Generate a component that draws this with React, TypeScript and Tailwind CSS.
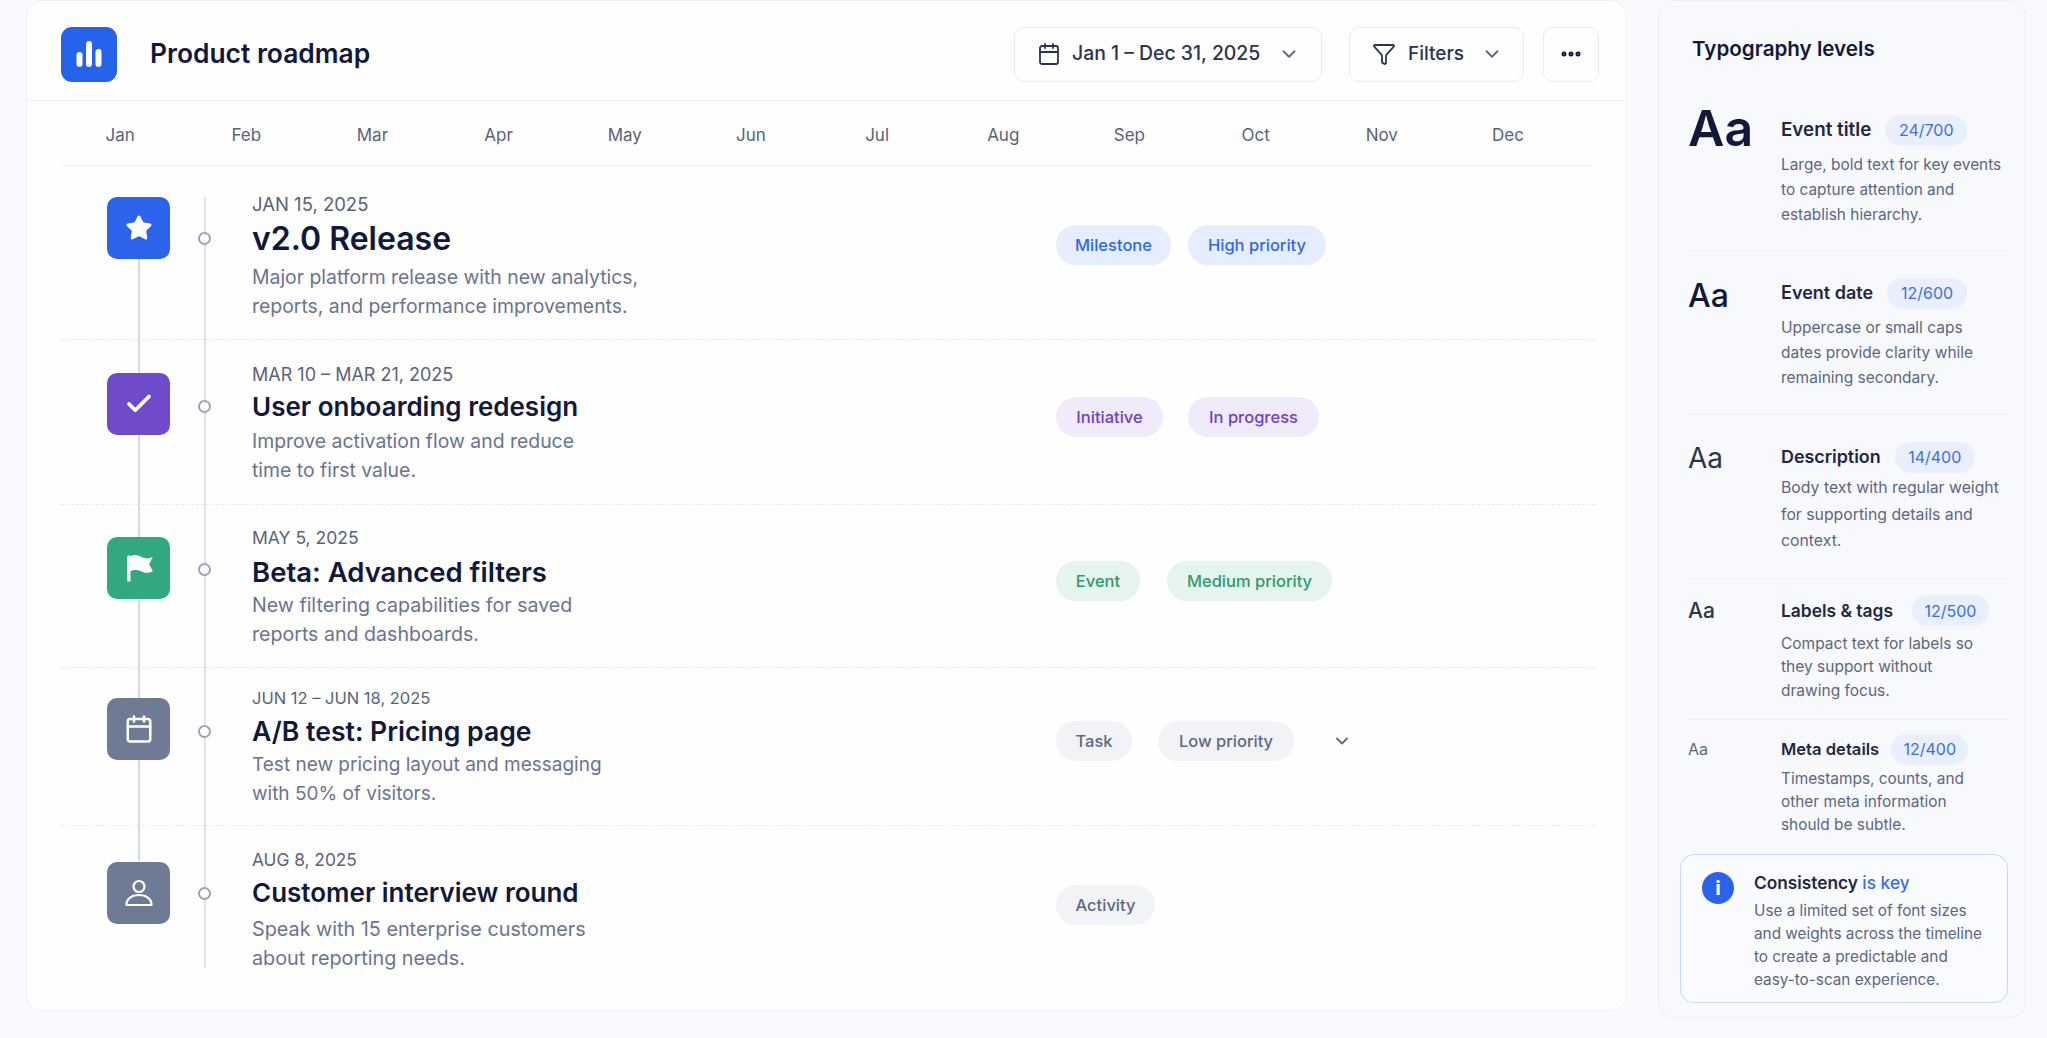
import { Calendar, Check, ChevronDown, Ellipsis, Funnel, Star } from 'lucide-react';

const months = ['Jan', 'Feb', 'Mar', 'Apr', 'May', 'Jun', 'Jul', 'Aug', 'Sep', 'Oct', 'Nov', 'Dec'];

const blueTag = 'bg-[#e6eefd] text-[#2f68e8]';
const purpleTag = 'bg-[#f0eafb] text-[#6d3fc8]';
const greenTag = 'bg-[#e5f5ee] text-[#2f9a6c]';
const grayTag = 'bg-[#f1f3f6] text-[#5f6880]';

function FlagIcon() {
  return (
    <svg width="32" height="32" viewBox="0 0 30 30" fill="white">
      <rect x="4" y="3" width="3" height="25" rx="1.5" />
      <path d="M6 4.500C10 1.500 15 3 18 5c3 1.500 6 1.500 10-.5L24.500 11.500 28 18c-4 2-7 2-10 .5-4-2-8-2.500-12 0z" />
    </svg>
  );
}

function PersonIcon() {
  return (
    <svg width="30" height="30" viewBox="0 0 30 30" fill="none" stroke="white" strokeWidth="2.2">
      <circle cx="15" cy="8.500" r="5.500" />
      <path d="M2.500 27c0-6.500 5.500-10 12.500-10s12.500 3.500 12.500 10z" strokeLinejoin="round" />
    </svg>
  );
}

const rows = [
  {
    date: 'JAN 15, 2025',
    dateSize: 'text-[18.500px]',
    title: 'v2.0 Release',
    titleSize: 'text-[32px] leading-[40px] mt-[5px]',
    desc: ['Major platform release with new analytics,', 'reports, and performance improvements.'],
    descSize: 'text-[19.400px]',
    rowClass: 'h-[174px]',
    tileTop: 'mt-[31px]',
    dotTop: 'mt-[66px]',
    textTop: 'mt-[28px]',
    descTop: 'mt-[4px]',
    tagsTop: 'mt-[59px] gap-[17px]',
    tile: 'bg-[#2b63ea]',
    icon: <Star size={28} fill="white" stroke="white" strokeWidth={1.5} />,
    tags: [['Milestone', blueTag, 'w-[115px]'], ['High priority', blueTag, 'w-[138px]']],
  },
  {
    date: 'MAR 10 – MAR 21, 2025',
    dateSize: 'text-[18px]',
    title: 'User onboarding redesign',
    titleSize: 'text-[26px] leading-[36px] mt-[4px]',
    desc: ['Improve activation flow and reduce', 'time to first value.'],
    descSize: 'text-[19.400px]',
    rowClass: 'h-[165px]',
    tileTop: 'mt-[33px]',
    dotTop: 'mt-[60px]',
    textTop: 'mt-[25px]',
    descTop: 'mt-[2px]',
    tagsTop: 'mt-[57px] gap-[25px]',
    tile: 'bg-[#6f4bc9]',
    icon: <Check size={30} stroke="white" strokeWidth={3} />,
    tags: [['Initiative', purpleTag, 'w-[107px]'], ['In progress', purpleTag, 'w-[131px]']],
  },
  {
    date: 'MAY 5, 2025',
    dateSize: 'text-[17.500px]',
    title: 'Beta: Advanced filters',
    titleSize: 'text-[27.500px] leading-[36px] mt-[6px]',
    desc: ['New filtering capabilities for saved', 'reports and dashboards.'],
    descSize: 'text-[19.600px]',
    rowClass: 'h-[163px]',
    tileTop: 'mt-[32px]',
    dotTop: 'mt-[58px]',
    textTop: 'mt-[23px]',
    descTop: 'mt-[1px]',
    tagsTop: 'mt-[56px] gap-[27px]',
    tile: 'bg-[#32a87e]',
    icon: <FlagIcon />,
    tags: [['Event', greenTag, 'w-[84px]'], ['Medium priority', greenTag, 'w-[165px]']],
  },
  {
    date: 'JUN 12 – JUN 18, 2025',
    dateSize: 'text-[16.500px]',
    title: 'A/B test: Pricing page',
    titleSize: 'text-[26.600px] leading-[36px] mt-[5px]',
    desc: ['Test new pricing layout and messaging', 'with 50% of visitors.'],
    descSize: 'text-[19px]',
    rowClass: 'h-[158px]',
    tileTop: 'mt-[30px]',
    dotTop: 'mt-[57px]',
    textTop: 'mt-[20px]',
    descTop: 'mt-[2px]',
    tagsTop: 'mt-[53px] gap-[26px]',
    tile: 'bg-[#6f7b94]',
    icon: <Calendar size={30} stroke="white" strokeWidth={2} />,
    tags: [['Task', grayTag, 'w-[76px]'], ['Low priority', grayTag, 'w-[136px]']],
    more: true,
  },
  {
    date: 'AUG 8, 2025',
    dateSize: 'text-[17.300px]',
    title: 'Customer interview round',
    titleSize: 'text-[26px] leading-[36px] mt-[5px]',
    desc: ['Speak with 15 enterprise customers', 'about reporting needs.'],
    descSize: 'text-[19.800px]',
    rowClass: 'h-[165px]',
    tileTop: 'mt-[36px]',
    dotTop: 'mt-[61px]',
    textTop: 'mt-[24px]',
    descTop: 'mt-[4px]',
    tagsTop: 'mt-[59px] gap-[26px]',
    tile: 'bg-[#6f7b94]',
    icon: <PersonIcon />,
    tags: [['Activity', grayTag, 'w-[99px]']],
  },
];

const levels = [
  {
    aa: 'text-[50px] font-semibold text-[#12183a] mt-[-2px]',
    name: 'Event title',
    nameSize: 'text-[18.800px]',
    spec: '24/700',
    pill: 'w-[82px] ml-[14px]',
    itemClass: 'mt-[55px] pb-[23px]',
    desc: ['Large, bold text for key events', 'to capture attention and', 'establish hierarchy.'],
    line: 'text-[15.400px] leading-[25px] mt-[10px]',
  },
  {
    aa: 'text-[32px] font-medium text-[#12183a] mt-[3px]',
    name: 'Event date',
    nameSize: 'text-[18px]',
    spec: '12/600',
    pill: 'w-[80px] ml-[14px]',
    itemClass: 'pt-[30px] pb-[24px]',
    desc: ['Uppercase or small caps', 'dates provide clarity while', 'remaining secondary.'],
    line: 'text-[15.500px] leading-[25px] mt-[10px]',
  },
  {
    aa: 'text-[28px] text-[#2b3350] mt-[1px]',
    name: 'Description',
    nameSize: 'text-[17.900px]',
    spec: '14/400',
    pill: 'w-[80px] ml-[14px]',
    itemClass: 'pt-[30px] pb-[23px]',
    desc: ['Body text with regular weight', 'for supporting details and', 'context.'],
    line: 'text-[15.800px] leading-[26.500px] mt-[6px]',
  },
  {
    aa: 'text-[21px] font-medium text-[#2b3350]',
    name: 'Labels & tags',
    nameSize: 'text-[17.400px]',
    spec: '12/500',
    pill: 'w-[77px] ml-[19px]',
    itemClass: 'pt-[20px] pb-[17px]',
    desc: ['Compact text for labels so', 'they support without', 'drawing focus.'],
    line: 'text-[15.500px] leading-[23.500px] mt-[9px]',
  },
  {
    aa: 'text-[16px] text-[#5f6880]',
    name: 'Meta details',
    nameSize: 'text-[16.600px]',
    spec: '12/400',
    pill: 'w-[77px] ml-[12px]',
    itemClass: 'pt-[17px]',
    desc: ['Timestamps, counts, and', 'other meta information', 'should be subtle.'],
    line: 'text-[15.400px] leading-[23px] mt-[6px]',
  },
];

export default function App() {
  return (
    <div className="h-[1038px] w-[2047px] overflow-hidden bg-[#f9fafd] font-['Inter',sans-serif]">
      <div className="flex items-start gap-[31px] pl-[26px]">
        {/* Roadmap card */}
        <main className="h-[1011px] w-[1601px] rounded-[16px] border border-[#eef0f6] bg-[#fefefe]">
          <header className="flex h-[100px] items-center border-b border-[#eef0f6] pl-[34px] pr-[27px] pt-[7px]">
            <div className="flex h-[55px] w-[56px] items-center justify-center rounded-[11px] bg-[#2563eb]">
              <svg width="30" height="30" viewBox="0 0 30 30" fill="white">
                <rect x="2.500" y="13" width="6" height="15" rx="3" />
                <rect x="12" y="2" width="6" height="26" rx="3" />
                <rect x="21.500" y="10" width="6" height="18" rx="3" />
              </svg>
            </div>
            <h1 className="ml-[33px] text-[26.400px] font-semibold text-[#12183a]">Product roadmap</h1>
            <div className="ml-auto flex items-center">
              <button className="flex h-[55px] w-[308px] items-center rounded-[10px] border border-[#e9ebf2] pl-[22px] text-[19.400px] font-medium text-[#2b3350]">
                <Calendar size={24} strokeWidth={1.8} />
                <span className="ml-[11px]">Jan 1 – Dec 31, 2025</span>
                <ChevronDown size={22} className="ml-auto mr-[21px] text-[#5f6880]" />
              </button>
              <button className="ml-[27px] flex h-[55px] w-[175px] items-center rounded-[10px] border border-[#e9ebf2] pl-[22px] text-[19px] font-medium text-[#2b3350]">
                <Funnel size={24} strokeWidth={1.8} />
                <span className="ml-[12px]">Filters</span>
                <ChevronDown size={22} className="ml-auto mr-[20px] text-[#5f6880]" />
              </button>
              <button className="ml-[19px] flex h-[55px] w-[56px] items-center justify-center rounded-[10px] border border-[#e9ebf2] text-[#12183a]">
                <Ellipsis size={24} strokeWidth={3} />
              </button>
            </div>
          </header>

          <div className="mx-[34px] h-[65px] w-[1534px] border-b border-[#eef0f6] pt-[6px]">
            <div className="ml-[-4px] grid h-full w-[1514px] grid-cols-12 items-center text-[17px] text-[#5a6378]">
              {months.map((m) => (
                <span key={m} className="text-center">{m}</span>
              ))}
            </div>
          </div>

          <div className="relative">
            <div className="absolute left-[111px] top-[90px] h-[605px] w-[2px] bg-[#d5d9e6]"></div>
            <div className="absolute left-[177px] top-[31px] h-[771px] w-[2px] bg-[#e0e3ee]"></div>
            {rows.map((row, i) => (
              <div
                key={row.title}
                className={`relative mx-[34px] flex w-[1534px] items-start ${row.rowClass} ${i < rows.length - 1 ? 'border-b border-dashed border-[#e6e9f2]' : ''}`}
              >
                <div className={`z-10 ml-[46px] flex h-[62px] w-[63px] shrink-0 items-center justify-center rounded-[10px] ${row.tile} ${row.tileTop}`}>
                  {row.icon}
                </div>
                <div className={`z-10 ml-[28px] h-[13px] w-[13px] shrink-0 rounded-full border-2 border-[#9aa3b8] bg-white ${row.dotTop}`}></div>
                <div className={`ml-[41px] w-[804px] shrink-0 ${row.textTop}`}>
                  <p className={`leading-[20px] text-[#5a6378] ${row.dateSize}`}>{row.date}</p>
                  <h2 className={`font-semibold text-[#12183a] ${row.titleSize}`}>{row.title}</h2>
                  <p className={`leading-[28.700px] text-[#6b7490] ${row.descSize} ${row.descTop}`}>
                    {row.desc[0]}
                    <br />
                    {row.desc[1]}
                  </p>
                </div>
                <div className={`flex items-center ${row.tagsTop}`}>
                  {row.tags.map(([label, color, width]) => (
                    <span key={label} className={`flex h-[40px] items-center justify-center rounded-full text-[16.500px] font-medium ${color} ${width}`}>
                      {label}
                    </span>
                  ))}
                  {row.more && <ChevronDown size={20} strokeWidth={2.2} className="ml-[12px] text-[#5f6880]" />}
                </div>
              </div>
            ))}
          </div>
        </main>

        {/* Typography panel */}
        <aside className="h-[1018px] w-[368px] rounded-[16px] border border-[#edf0f7] bg-[#f8f9fd] pl-[29px] pt-[34px]">
          <h2 className="ml-[4px] text-[20.600px] font-semibold leading-[28px] text-[#12183a]">Typography levels</h2>
          {levels.map((level, i) => (
            <div
              key={level.name}
              className={`flex w-[320px] ${level.itemClass} ${i < levels.length - 1 ? 'border-b border-[#eef0f7]' : ''}`}
            >
              <div className={`h-[24px] w-[93px] shrink-0 whitespace-nowrap leading-[24px] ${level.aa}`}>Aa</div>
              <div>
                <div className="flex h-[24px] items-center">
                  <span className={`font-semibold leading-[24px] text-[#1f2745] ${level.nameSize}`}>{level.name}</span>
                  <span className={`flex h-[31px] items-center justify-center rounded-full bg-[#e9effc] text-[16px] text-[#3b6fe8] ${level.pill}`}>
                    {level.spec}
                  </span>
                </div>
                <p className={`text-[#5d6680] ${level.line}`}>
                  {level.desc[0]}
                  <br />
                  {level.desc[1]}
                  <br />
                  {level.desc[2]}
                </p>
              </div>
            </div>
          ))}
          <div className="ml-[-8px] mt-[18px] flex h-[149px] w-[328px] rounded-[14px] border border-[#c8d8f6] bg-[#f9fbff] pl-[21px] pt-[17px]">
            <div className="flex h-[32px] w-[32px] shrink-0 items-center justify-center rounded-full bg-[#2b63ea] text-[20px] font-bold leading-none text-white">i</div>
            <div className="ml-[20px]">
              <p className="text-[17.300px] font-semibold leading-[22px] text-[#1f2745]">
                Consistency <span className="font-medium text-[#3b6fe8]">is key</span>
              </p>
              <p className="mt-[5px] text-[15.300px] leading-[23px] text-[#5d6680]">
                Use a limited set of font sizes
                <br />
                and weights across the timeline
                <br />
                to create a predictable and
                <br />
                easy-to-scan experience.
              </p>
            </div>
          </div>
        </aside>
      </div>
    </div>
  );
}
